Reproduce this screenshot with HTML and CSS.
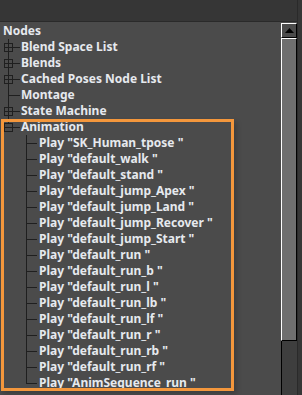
FILE: index.html
```html
<!DOCTYPE html>
<html>
<head>
<meta charset="utf-8">
<link rel="stylesheet" href="styles.css">
</head>
<body>
<div class="frame">
  <div class="main">
    <div class="topbar"></div>
    <div class="content">
      <div class="tree">
        <div class="row root">Nodes</div>
        <div class="row"><svg class="g1" width="20" height="16"><line x1="8.5" y1="0" x2="8.5" y2="16"/><line x1="8" y1="8.5" x2="20" y2="8.5"/><rect x="4.5" y="4.5" width="8" height="8"/><line x1="8.5" y1="4" x2="8.5" y2="13"/><line x1="4" y1="8.5" x2="13" y2="8.5"/></svg><span>Blend Space List</span></div>
        <div class="row"><svg class="g1" width="20" height="16"><line x1="8.5" y1="0" x2="8.5" y2="16"/><line x1="8" y1="8.5" x2="20" y2="8.5"/><rect x="4.5" y="4.5" width="8" height="8"/><line x1="8.5" y1="4" x2="8.5" y2="13"/><line x1="4" y1="8.5" x2="13" y2="8.5"/></svg><span>Blends</span></div>
        <div class="row"><svg class="g1" width="20" height="16"><line x1="8.5" y1="0" x2="8.5" y2="16"/><line x1="8" y1="8.5" x2="20" y2="8.5"/><rect x="4.5" y="4.5" width="8" height="8"/><line x1="8.5" y1="4" x2="8.5" y2="13"/><line x1="4" y1="8.5" x2="13" y2="8.5"/></svg><span>Cached Poses Node List</span></div>
        <div class="row"><svg class="g1" width="20" height="16"><line x1="8.5" y1="0" x2="8.5" y2="16"/><line x1="8" y1="8.5" x2="20" y2="8.5"/></svg><span>Montage</span></div>
        <div class="row"><svg class="g1" width="20" height="16"><line x1="8.5" y1="0" x2="8.5" y2="16"/><line x1="8" y1="8.5" x2="20" y2="8.5"/><rect x="4.5" y="4.5" width="8" height="8"/><line x1="8.5" y1="4" x2="8.5" y2="13"/><line x1="4" y1="8.5" x2="13" y2="8.5"/></svg><span>State Machine</span></div>
        <div class="highlight">
          <div class="row"><svg class="g1" width="20" height="16"><line x1="8.5" y1="0" x2="8.5" y2="5"/><line x1="8" y1="8.5" x2="20" y2="8.5"/><rect x="4.5" y="4.5" width="8" height="8"/><line x1="4" y1="8.5" x2="13" y2="8.5"/></svg><span>Animation</span></div>
          <div class="row"><svg class="g2" width="38" height="16"><line x1="26.5" y1="0" x2="26.5" y2="16"/><line x1="26" y1="8.5" x2="37" y2="8.5"/></svg><span>Play "SK_Human_tpose "</span></div>
          <div class="row"><svg class="g2" width="38" height="16"><line x1="26.5" y1="0" x2="26.5" y2="16"/><line x1="26" y1="8.5" x2="37" y2="8.5"/></svg><span>Play "default_walk "</span></div>
          <div class="row"><svg class="g2" width="38" height="16"><line x1="26.5" y1="0" x2="26.5" y2="16"/><line x1="26" y1="8.5" x2="37" y2="8.5"/></svg><span>Play "default_stand "</span></div>
          <div class="row"><svg class="g2" width="38" height="16"><line x1="26.5" y1="0" x2="26.5" y2="16"/><line x1="26" y1="8.5" x2="37" y2="8.5"/></svg><span>Play "default_jump_Apex "</span></div>
          <div class="row"><svg class="g2" width="38" height="16"><line x1="26.5" y1="0" x2="26.5" y2="16"/><line x1="26" y1="8.5" x2="37" y2="8.5"/></svg><span>Play "default_jump_Land "</span></div>
          <div class="row"><svg class="g2" width="38" height="16"><line x1="26.5" y1="0" x2="26.5" y2="16"/><line x1="26" y1="8.5" x2="37" y2="8.5"/></svg><span>Play "default_jump_Recover "</span></div>
          <div class="row"><svg class="g2" width="38" height="16"><line x1="26.5" y1="0" x2="26.5" y2="16"/><line x1="26" y1="8.5" x2="37" y2="8.5"/></svg><span>Play "default_jump_Start "</span></div>
          <div class="row"><svg class="g2" width="38" height="16"><line x1="26.5" y1="0" x2="26.5" y2="16"/><line x1="26" y1="8.5" x2="37" y2="8.5"/></svg><span>Play "default_run "</span></div>
          <div class="row"><svg class="g2" width="38" height="16"><line x1="26.5" y1="0" x2="26.5" y2="16"/><line x1="26" y1="8.5" x2="37" y2="8.5"/></svg><span>Play "default_run_b "</span></div>
          <div class="row"><svg class="g2" width="38" height="16"><line x1="26.5" y1="0" x2="26.5" y2="16"/><line x1="26" y1="8.5" x2="37" y2="8.5"/></svg><span>Play "default_run_l "</span></div>
          <div class="row"><svg class="g2" width="38" height="16"><line x1="26.5" y1="0" x2="26.5" y2="16"/><line x1="26" y1="8.5" x2="37" y2="8.5"/></svg><span>Play "default_run_lb "</span></div>
          <div class="row"><svg class="g2" width="38" height="16"><line x1="26.5" y1="0" x2="26.5" y2="16"/><line x1="26" y1="8.5" x2="37" y2="8.5"/></svg><span>Play "default_run_lf "</span></div>
          <div class="row"><svg class="g2" width="38" height="16"><line x1="26.5" y1="0" x2="26.5" y2="16"/><line x1="26" y1="8.5" x2="37" y2="8.5"/></svg><span>Play "default_run_r "</span></div>
          <div class="row"><svg class="g2" width="38" height="16"><line x1="26.5" y1="0" x2="26.5" y2="16"/><line x1="26" y1="8.5" x2="37" y2="8.5"/></svg><span>Play "default_run_rb "</span></div>
          <div class="row"><svg class="g2" width="38" height="16"><line x1="26.5" y1="0" x2="26.5" y2="16"/><line x1="26" y1="8.5" x2="37" y2="8.5"/></svg><span>Play "default_run_rf "</span></div>
          <div class="row"><svg class="g2" width="38" height="16"><line x1="26.5" y1="0" x2="26.5" y2="9"/><line x1="26" y1="8.5" x2="37" y2="8.5"/></svg><span>Play "AnimSequence_run "</span></div>
        </div>
      </div>
      <div class="scrollbar">
        <div class="sb-btn"><svg width="9" height="5"><polygon points="0,5 4.5,0 9,5"/></svg></div>
        <div class="sb-thumb"></div>
        <div class="sb-track"></div>
      </div>
    </div>
  </div>
  <div class="edge"></div>
</div>
</body>
</html>
```

FILE: styles.css
```css
html, body {
  margin: 0;
  padding: 0;
  background: #4b4b4b;
}
body {
  width: 302px;
  height: 395px;
  overflow: hidden;
  font-family: "Noto Sans", "Open Sans", sans-serif;
  font-weight: 700;
  font-size: 12px;
  color: #e6e9ee;
}
.frame {
  display: flex;
  height: 395px;
}
.main {
  width: 298px;
  display: flex;
  flex-direction: column;
}
.topbar {
  height: 21px;
  background: #363636;
  border-bottom: 1px solid #2a2a2a;
  flex: none;
}
.content {
  flex: 1;
  display: flex;
  padding-top: 1px;
  min-height: 0;
}
.tree {
  flex: 1;
  background: #4b4b4b;
}
.row {
  height: 16px;
  line-height: 16px;
  display: flex;
  align-items: center;
  white-space: nowrap;
}
.row svg {
  flex: none;
  shape-rendering: crispEdges;
}
.row svg line {
  stroke: #1f1f1f;
  stroke-width: 1;
}
.row svg rect {
  fill: #4b4b4b;
  stroke: #1f1f1f;
  stroke-width: 1;
}
.row span {
  margin-left: 1px;
}
.root {
  padding-left: 3px;
}
.highlight {
  position: relative;
  width: 234px;
  box-shadow: 3px 3px 5px rgba(0,0,0,0.18);
}
.highlight::after {
  content: "";
  position: absolute;
  top: 0;
  left: 1px;
  right: 0;
  bottom: 0;
  border: 3px solid #f4973c;
  pointer-events: none;
}
.scrollbar {
  width: 16px;
  display: flex;
  flex-direction: column;
  flex: none;
}
.sb-btn {
  height: 13px;
  background: #4b4b4b;
  border-top: 1px solid #ffffff;
  border-left: 1px solid #ffffff;
  border-right: 1px solid #000;
  border-bottom: 1px solid #000;
  display: flex;
  align-items: center;
  justify-content: center;
}
.sb-btn polygon {
  fill: #000;
}
.sb-thumb {
  height: 301px;
  background: #6f6f6f;
  border-top: 1px solid #ffffff;
  border-left: 1px solid #ffffff;
  border-right: 1px solid #000;
  border-bottom: 1px solid #000;
}
.sb-track {
  flex: 1;
  background: #3e3e3e;
  border-left: 1px solid #000;
}
.edge {
  width: 4px;
  background: #363636;
  border-left: 1px solid #2a2a2a;
}
```
